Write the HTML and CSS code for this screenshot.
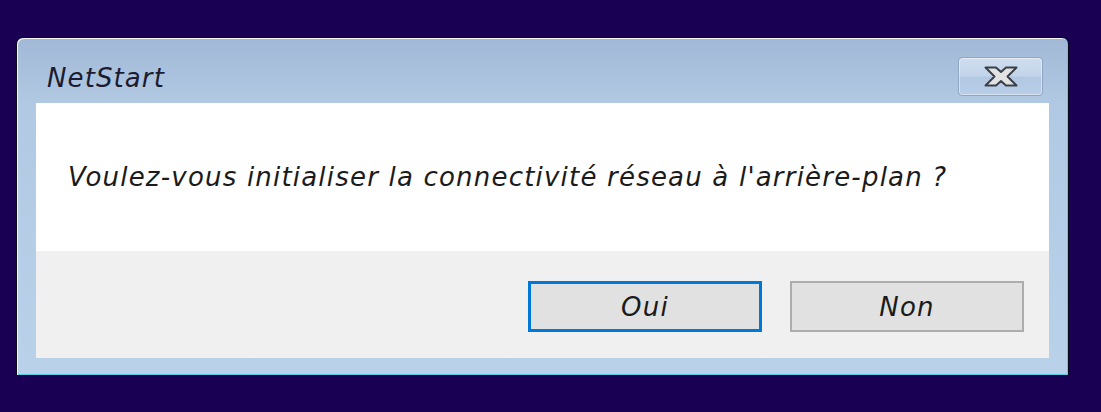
FILE: index.html
```html
<!DOCTYPE html>
<html lang="fr">
<head>
    <meta charset="UTF-8">
    <meta name="viewport" content="width=device-width, initial-scale=1.0">
    <title>NetStart</title>
    <link rel="stylesheet" href="styles.css">
</head>
<body>
    <div class="window">
        <div class="titlebar">
            <span class="title">NetStart</span>
            <button class="close" aria-label="Fermer">
                <svg width="34" height="21" viewBox="0 0 34 21">
                    <path d="M1.5 1.5 L12 1.5 L17 6 L22 1.5 L32.5 1.5 L23.5 10.5 L32.5 19.5 L22 19.5 L17 15 L12 19.5 L1.5 19.5 L10.5 10.5 Z"
                          fill="#e2e2e2" stroke="#3a404a" stroke-width="2" stroke-linejoin="round"/>
                </svg>
            </button>
        </div>

        <div class="content">
            <!-- Message -->
            <div class="message">
                <p>Voulez-vous initialiser la connectivité réseau à l'arrière-plan ?</p>
            </div>

            <!-- Buttons -->
            <div class="actions">
                <button class="button button-default">Oui</button>
                <button class="button">Non</button>
            </div>
        </div>
    </div>
</body>
</html>
```

FILE: styles.css
```css
html, body {
    height: 100%;
}
body {
    margin: 0;
    padding: 37px 0 0 16px;
    box-sizing: border-box;
    background-color: #1a0052;
    font-family: "DejaVu Sans", Verdana, sans-serif;
    font-style: italic;
    color: #1b1b1b;
}
.window {
    width: 1053px;
    height: 339px;
    box-sizing: border-box;
    display: flex;
    flex-direction: column;
    padding: 0 19px 17px 19px;
    border: 1px solid #0a0a22;
    border-radius: 7px 7px 0 0;
    background: linear-gradient(to bottom, #a1b9d6 0%, #b2c9e3 20%, #bad1ea 100%);
    box-shadow: inset 1px 1px 0 #f4f8fc, inset -1px -1px 0 #5cc9e6;
}
.titlebar {
    height: 65px;
    flex: none;
    display: flex;
    justify-content: space-between;
    align-items: flex-start;
}
.title {
    margin: 25px 0 0 11px;
    font-size: 26px;
    line-height: 30px;
    letter-spacing: 1.1px;
    color: #1c1c30;
}
.close {
    width: 85px;
    height: 39px;
    margin: 19px 6px 0 0;
    padding: 0;
    display: flex;
    align-items: center;
    justify-content: center;
    border: 1px solid #8ea6c4;
    border-radius: 4px;
    background: linear-gradient(to bottom, #cfdeef 0%, #c2d4ea 48%, #b3c8e2 52%, #b8cde6 100%);
    box-shadow: inset 0 0 0 1px rgba(255, 255, 255, 0.45);
}
.content {
    flex: 1;
    display: flex;
    flex-direction: column;
}
.message {
    height: 148px;
    display: flex;
    align-items: center;
    padding-left: 32px;
    background: #fff;
}
.message p {
    margin: 0;
    font-size: 26px;
    letter-spacing: 1.2px;
}
.actions {
    flex: 1;
    display: flex;
    justify-content: flex-end;
    gap: 28px;
    padding: 30px 25px 0 0;
    background: #f0f0f0;
}
.button {
    width: 234px;
    height: 51px;
    font-family: inherit;
    font-style: italic;
    font-size: 26px;
    letter-spacing: 1.2px;
    color: #1b1b1b;
    background: #e1e1e1;
    border: 2px solid #adadad;
}
.button-default {
    border: 3px solid #0078d7;
}
```
